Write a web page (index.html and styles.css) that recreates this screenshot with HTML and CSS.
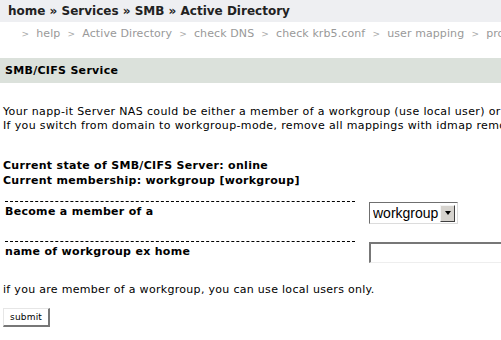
FILE: index.html
```html
<!DOCTYPE html>
<html lang="en">
<head>
    <meta charset="UTF-8">
    <title>SMB/CIFS Service</title>
    <link rel="stylesheet" href="styles.css">
</head>
<body>

<div id="page">
    <div class="top-nav">home &raquo; Services &raquo; SMB &raquo; Active Directory</div>
    <div class="sub-nav">
        <span class="arr">&gt;</span> help
        <span class="arr">&gt;</span> Active Directory
        <span class="arr">&gt;</span> check DNS
        <span class="arr">&gt;</span> check krb5.conf
        <span class="arr">&gt;</span> user mapping
        <span class="arr">&gt;</span> properties
    </div>

    <div class="section-title">SMB/CIFS Service</div>

    <p class="intro">
        Your napp-it Server NAS could be either a member of a workgroup (use local user) or a member of a domain<br>
        If you switch from domain to workgroup-mode, remove all mappings with idmap remove
    </p>

    <p class="state">
        Current state of SMB/CIFS Server: online<br>
        Current membership: workgroup [workgroup]
    </p>

    <form class="member-form">
        <div class="form-row">
            <div class="label">Become a member of a</div>
            <div class="control">
                <span class="old-select">
                    <select>
                        <option>workgroup</option>
                        <option>domain</option>
                    </select>
                    <span class="drop-btn"></span>
                </span>
            </div>
        </div>
        <div class="form-row">
            <div class="label">name of workgroup ex home</div>
            <div class="control">
                <input type="text" class="old-input">
            </div>
        </div>

        <p class="note">if you are member of a workgroup, you can use local users only.</p>

        <button type="button" class="old-btn">submit</button>
    </form>
</div>

</body>
</html>
```

FILE: styles.css
```css
/* Page */
body {
    margin: 0;
    font-family: "DejaVu Sans", Verdana, sans-serif;
    font-size: 11px;
    letter-spacing: 0.3px;
    color: #000;
    background: #fff;
    overflow: hidden;
}

#page {
    width: 900px;
    white-space: nowrap;
}

/* Navigation */
.top-nav {
    background-color: #eeeff2;
    height: 22px;
    line-height: 22px;
    padding-left: 8px;
    font-size: 12px;
    font-weight: bold;
    letter-spacing: 0;
    color: #222;
}

.sub-nav {
    height: 22px;
    line-height: 23px;
    padding-left: 18px;
    color: #999;
    letter-spacing: 0.1px;
}

.sub-nav .arr {
    font-size: 9px;
    color: #aaa;
    margin: 0 3.5px;
}

/* Section header */
.section-title {
    margin-top: 14px;
    background-color: #dbe1db;
    height: 25px;
    line-height: 25px;
    padding-left: 5px;
    font-weight: bold;
}

.intro {
    margin: 22px 0 0 3px;
    line-height: 14px;
    letter-spacing: 0.36px;
}

.state {
    margin: 25px 0 0 3px;
    line-height: 15px;
    font-weight: bold;
}

/* Form */
.member-form {
    margin-top: 13px;
}

.form-row {
    display: flex;
    height: 40px;
}

.form-row .label {
    width: 350px;
    margin-left: 5px;
    border-top: 1px dashed #000;
    font-weight: bold;
    padding-top: 3px;
    line-height: 13px;
}

.form-row .control {
    margin-left: 14px;
    padding-top: 1px;
}

/* old style dropdown */
.old-select {
    display: inline-flex;
    align-items: center;
    height: 20px;
    border-top: 1px solid #6f6f6f;
    border-left: 1px solid #6f6f6f;
    border-right: 1px solid #dcdcdc;
    border-bottom: 1px solid #dcdcdc;
    background: #fff;
}

.old-select select {
    appearance: none;
    -webkit-appearance: none;
    border: none;
    background: transparent;
    font-family: "Liberation Sans", Arial, sans-serif;
    font-size: 14px;
    letter-spacing: 0;
    padding: 0 0 0 3px;
    height: 20px;
    width: 70px;
    outline: none;
}

.drop-btn {
    display: flex;
    align-items: center;
    justify-content: center;
    width: 13px;
    height: 15px;
    margin-right: 2px;
    background: #d6d3ce;
    border-top: 1px solid #f4f4f4;
    border-left: 1px solid #f4f4f4;
    border-right: 1px solid #404040;
    border-bottom: 1px solid #404040;
}

.drop-btn::before {
    content: "";
    border-left: 3.5px solid transparent;
    border-right: 3.5px solid transparent;
    border-top: 4px solid #000;
}

.old-input {
    width: 200px;
    height: 18px;
    padding: 0;
    border-top: 2px solid #777;
    border-left: 2px solid #777;
    border-right: 1px solid #eee;
    border-bottom: 1px solid #eee;
}

.note {
    margin: 2px 0 0 3px;
}

.old-btn {
    margin: 12px 0 0 3px;
    font-family: "DejaVu Sans", Verdana, sans-serif;
    font-size: 9px;
    letter-spacing: 0.2px;
    height: 19px;
    padding: 0 6px;
    background: #fff;
    border-top: 1px solid #e6e6e6;
    border-left: 1px solid #e6e6e6;
    border-right: 2px solid #777;
    border-bottom: 2px solid #777;
}
```
